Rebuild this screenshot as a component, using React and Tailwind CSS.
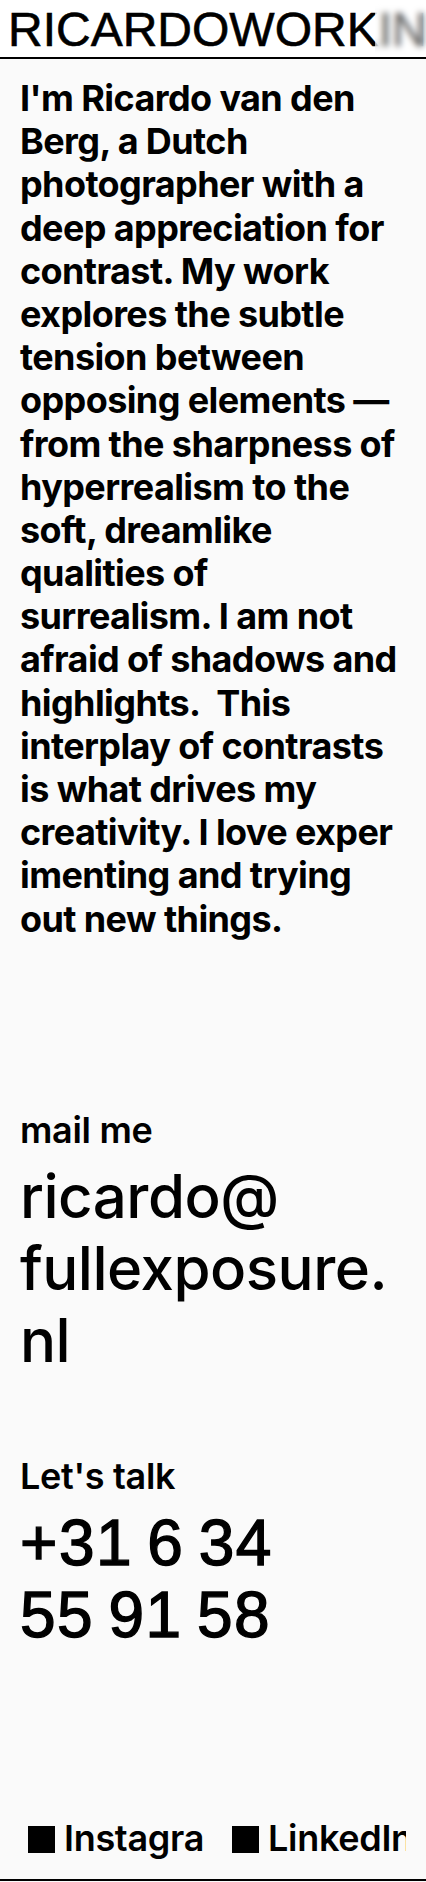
export default function App() {
  const lines = [
    "I'm Ricardo van den",
    "Berg, a Dutch",
    "photographer with a",
    "deep appreciation for",
    "contrast. My work",
    "explores the subtle",
    "tension between",
    "opposing elements —",
    "from the sharpness of",
    "hyperrealism to the",
    "soft, dreamlike",
    "qualities of",
    "surrealism. I am not",
    "afraid of shadows and",
    "highlights.\u00a0 This",
    "interplay of contrasts",
    "is what drives my",
    "creativity. I love exper",
    "imenting and trying",
    "out new things.",
  ];
  const sans = { fontFamily: "Inter, 'Noto Sans', sans-serif" };
  return (
    <div className="w-[426px] min-h-[1882px] bg-[#fafafa] text-black flex flex-col" style={sans}>
      <header className="relative h-[59px] bg-white border-b-2 border-black overflow-hidden">
        <div className="pl-[8px] pt-[3px] whitespace-nowrap text-[48px] leading-[54px] [-webkit-text-stroke:0.6px_black] font-['Liberation_Sans',Arial,sans-serif]">
          RICARDOWORKINFO
        </div>
        <div className="absolute right-0 top-0 h-[57px] w-[51px] backdrop-blur-[3px] bg-white/40"></div>
      </header>

      <main className="flex flex-col px-5">
        <p className="pt-[18px] text-[36px] leading-[1.2] font-bold tracking-[-0.6px]">
          {lines.map((l, i) => (
            <span key={i} className="block whitespace-nowrap">{l}</span>
          ))}
        </p>

        <section className="mt-[168px] flex flex-col">
          <div className="text-[36px] leading-[1.2] font-semibold tracking-[-0.3px]">mail me</div>
          <div className="mt-[8px] text-[60px] leading-[1.2] font-medium tracking-[-0.5px]">
            <span className="block">ricardo@</span>
            <span className="block">fullexposure.</span>
            <span className="block">nl</span>
          </div>
        </section>

        <section className="mt-[79px] flex flex-col">
          <div className="text-[36px] leading-[1.2] font-semibold tracking-[-0.3px]">Let's talk</div>
          <div className="mt-[9px] text-[64px] leading-[72px] font-normal tracking-[1.5px] [word-spacing:-5px] [-webkit-text-stroke:1.4px_black] font-['Liberation_Sans',Arial,sans-serif]">
            <span className="block">+31 6 34</span>
            <span className="block">55 91 58</span>
          </div>
        </section>
      </main>

      <footer className="mt-[166px] pb-[19px] border-b-2 border-black flex pl-[28px] gap-[29px]">
        <a className="w-[175px] overflow-hidden whitespace-nowrap flex items-center gap-[9px] text-[36px] leading-[1.2] font-semibold tracking-[-0.3px]">
          <span className="w-[27px] h-[27px] bg-black shrink-0 mt-[2px]"></span>
          <span>Instagram</span>
        </a>
        <a className="w-[174px] overflow-hidden whitespace-nowrap flex items-center gap-[9px] text-[36px] leading-[1.2] font-semibold tracking-[-0.3px]">
          <span className="w-[27px] h-[27px] bg-black shrink-0 mt-[2px]"></span>
          <span>LinkedIn</span>
        </a>
      </footer>
    </div>
  );
}
